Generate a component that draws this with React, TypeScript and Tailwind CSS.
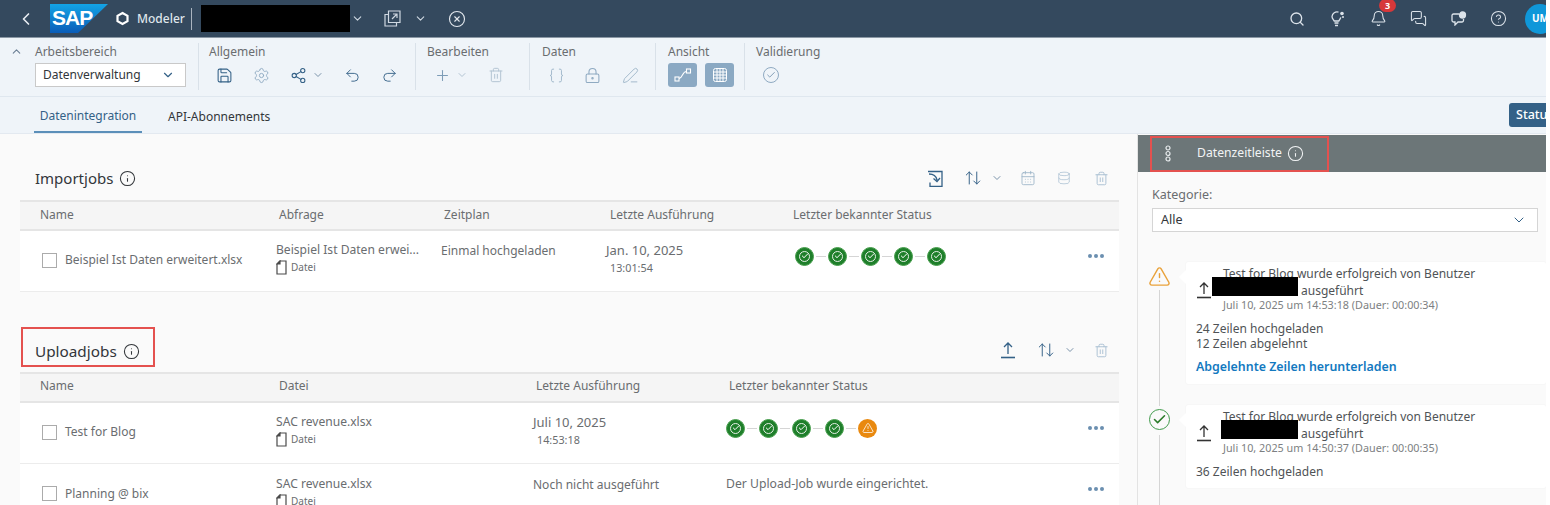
import { ArrowUpDown, Bell, Braces, CalendarDays, Check, ChevronDown, ChevronLeft, ChevronUp, CircleHelp, CircleX, Database, Info, LockKeyhole, MessagesSquare, PenLine, Plus, Redo2, Save, Search, Settings, Share2, Trash2, TriangleAlert, Undo2 } from "lucide-react";

const FileGlyph = () => (
  <svg width="11" height="15" viewBox="0 0 11 15" fill="none" stroke="#4a4a4a" strokeWidth="1.2">
    <path d="M4 1h6v13H1V4z" />
    <path d="M4 1 1 4h3z" fill="#4a4a4a" />
  </svg>
);

const UploadGlyph = ({ color = "#346187", size = 16 }: { color?: string; size?: number }) => (
  <svg width={size} height={size + 2} viewBox="0 0 16 18" fill="none" stroke={color} strokeWidth="1.3">
    <path d="M8 13V2M4 6l4-4 4 4" />
    <path d="M1 16.5h14" strokeWidth="1.6" />
  </svg>
);

const ImportGlyph = () => (
  <svg width="16" height="17" viewBox="0 0 16 17" fill="none" stroke="#346187" strokeWidth="1.3">
    <path d="M1 1.5h14v15H3v-4" />
    <path d="M2 4c3 0 7 1 8 6M6.500 8.500l3.500 3 3-3.500" />
  </svg>
);

const ChainGlyph = ({ color = "#fff" }: { color?: string }) => (
  <svg width="8" height="17" viewBox="0 0 8 17" fill="none" stroke={color} strokeWidth="1.2">
    <circle cx="4" cy="3" r="2" />
    <circle cx="4" cy="8.500" r="2" />
    <circle cx="4" cy="14" r="2" />
  </svg>
);

const ModelerGlyph = () => (
  <svg width="15" height="15" viewBox="0 0 15 15" fill="none" stroke="#fff" strokeWidth="2.200">
    <path d="M7.500 2 12.500 4.800v5.400L7.500 13 2.500 10.200V4.800z" />
  </svg>
);

const PopupGlyph = () => (
  <svg width="17" height="17" viewBox="0 0 17 17" fill="none" stroke="#cfd8e2" strokeWidth="1.2">
    <path d="M4.500 1h11.500v11.500H4.500z" />
    <path d="M4 4.500H1V16h11.500v-3" />
    <path d="M8 9l5-5M9 4h4v4" />
  </svg>
);

const DiagramGlyph = () => (
  <svg width="18" height="14" viewBox="0 0 18 14" fill="none" stroke="#fff" strokeWidth="1.100">
    <rect x="1" y="9" width="4" height="4" />
    <rect x="12.500" y="1" width="4" height="4" />
    <path d="M5 10.500C9 10 8 3.500 12.500 3.500" />
  </svg>
);

const GridGlyph = () => (
  <svg width="16" height="16" viewBox="0 0 16 16" fill="none" stroke="#fff" strokeWidth="1">
    <rect x="1.500" y="1.500" width="13" height="13" rx="2" />
    <path d="M1.500 5h13M1.500 8h13M1.500 11h13M5 1.500v13M8 1.500v13M11 1.500v13" />
  </svg>
);

const ChatCircleGlyph = () => (
  <svg width="16" height="15" viewBox="0 0 16 15" fill="none" stroke="#dce3ea" strokeWidth="1.300">
    <path d="M8 3H2.500A1.500 1.500 0 0 0 1 4.500v5A1.500 1.500 0 0 0 2.500 11H4v3l3-3h4a1.500 1.500 0 0 0 1.500-1.500V8" />
    <circle cx="11.500" cy="4" r="3" fill="#dce3ea" />
  </svg>
);

const BulbGlyph = () => (
  <svg width="17" height="18" viewBox="0 0 17 18" fill="none" stroke="#dce3ea" strokeWidth="1.300">
    <path d="M9.500 2.200A5 5 0 0 0 3 6.500c0 2 1.500 3 2.200 4.500h4.600c.6-1.300 1.700-2.200 2-3.600" />
    <path d="M5.500 13h4M6 15.500h3" strokeWidth="1.600" />
    <circle cx="13" cy="3.500" r="1.800" fill="#dce3ea" stroke="none" />
    <circle cx="14" cy="7" r="1" fill="#dce3ea" stroke="none" />
  </svg>
);

const SapLogo = () => (
  <svg width="58" height="29" viewBox="0 0 58 29" className="shrink-0">
    <defs>
      <linearGradient id="sapFill" x1="0" y1="0" x2="0" y2="1">
        <stop offset="0" stopColor="#13a4e6" />
        <stop offset="1" stopColor="#0a5cb8" />
      </linearGradient>
    </defs>
    <polygon points="0,0 58,0 28,29 0,29" fill="url(#sapFill)" />
    <text x="2" y="21" fill="#fff" fontSize="21" fontWeight="700" fontFamily="'Liberation Sans', sans-serif" letterSpacing="-1">SAP</text>
  </svg>
);

const RedBox = ({ className }: { className: string }) => (
  <div className={`absolute border-2 border-[#e4514f] ${className}`} />
);

const Group = ({ label, children, last = false, className = "" }: { label: string; children: React.ReactNode; last?: boolean; className?: string }) => (
  <div className={`flex h-[47px] flex-col ${last ? "" : "border-r border-[#d9e1e9]"} ${className}`}>
    <span className="text-[12px] leading-[17px] text-[#6a6d70]">{label}</span>
    <div className="mt-[3px] flex h-[24px] items-center">{children}</div>
  </div>
);

const StatusOk = () => (
  <span className="flex h-[19px] w-[19px] items-center justify-center rounded-full border border-[#4aa04f] bg-[#1f7f2b]">
    <span className="flex h-[11px] w-[11px] items-center justify-center rounded-full border border-[#e6efe6]">
      <Check size={8} color="#fff" strokeWidth={3} />
    </span>
  </span>
);

const StatusWarn = () => (
  <span className="flex h-[19px] w-[19px] items-center justify-center rounded-full bg-[#e9890f]">
    <TriangleAlert size={12} color="#fff" strokeWidth={1.5} />
  </span>
);

const StatusTrail = ({ warn = false }: { warn?: boolean }) => (
  <div className="flex items-center">
    {[0, 1, 2, 3].map((i) => (
      <div key={i} className="flex items-center">
        <StatusOk />
        <span className="mx-[2px] h-px w-[10px] bg-[#d5d5d5]" />
      </div>
    ))}
    {warn ? <StatusWarn /> : <StatusOk />}
  </div>
);

const MoreDots = () => (
  <div className="flex gap-[2px]">
    <span className="h-[4px] w-[4px] rounded-full bg-[#6b8fb0]" />
    <span className="h-[4px] w-[4px] rounded-full bg-[#6b8fb0]" />
    <span className="h-[4px] w-[4px] rounded-full bg-[#6b8fb0]" />
  </div>
);

const NameCell = ({ name }: { name: string }) => (
  <div className="flex items-center pb-[2px] pl-[22px]">
    <span className="mr-[8px] h-[15px] w-[15px] border border-[#ababab] bg-white" />
    <span className="text-[12px] text-[#6a6d70]">{name}</span>
  </div>
);

const SourceCell = ({ name }: { name: string }) => (
  <div className="mb-[6px] flex flex-col">
    <span className="text-[12.100px] leading-[17px] text-[#6a6d70]">{name}</span>
    <span className="mt-[2px] flex items-center gap-[4px] text-[10px] leading-[15px] text-[#6a6d70]"><FileGlyph />Datei</span>
  </div>
);

const DateCell = ({ date, time }: { date: string; time: string }) => (
  <div className="mb-[6px] flex flex-col">
    <span className="text-[13px] leading-[17px] text-[#6a6d70]">{date}</span>
    <span className="mt-[2px] pl-[4px] text-[10.800px] leading-[14px] text-[#6a6d70]">{time}</span>
  </div>
);

const Card = ({ barClass, lines, link = false, date }: { barClass: string; lines: string[]; link?: boolean; date: string }) => (
  <div className="relative ml-[48px] w-[360px] rounded-[2px] bg-white pb-[9px] pl-[10px] pt-[3px] text-[#4f5356] shadow-[0_0_2px_rgba(0,0,0,0.06)]">
    <span className="absolute left-[-5px] top-[10px] h-[10px] w-[10px] rotate-45 bg-white" />
    <div className="flex">
      <div className="mt-[16px] w-[27px] shrink-0">
        <UploadGlyph color="#333" />
      </div>
      <div className="relative text-[12px] leading-[17px]">
        <div>Test for Blog wurde erfolgreich von Benutzer</div>
        <div className="pl-[78px]">ausgeführt</div>
        <div className={`absolute top-[12px] h-[19px] bg-black ${barClass}`} />
        <div className="mt-[-1px] text-[10.800px] leading-[14px] text-[#7d7f82]">{date}</div>
      </div>
    </div>
    <div className="mt-[9px] text-[12px] leading-[15px]">
      {lines.map((l) => (
        <div key={l}>{l}</div>
      ))}
    </div>
    {link && <div className="mt-[7px] text-[12.400px] font-semibold leading-[17px] text-[#1379bf]">Abgelehnte Zeilen herunterladen</div>}
  </div>
);

export default function App() {
  return (
    <div className="h-[505px] w-[1550px] overflow-hidden bg-white font-['Noto_Sans',sans-serif]">
      <div className="relative h-[505px] w-[1546px] overflow-hidden">
        {/* Shell */}
        <header className="flex h-[38px] items-center border-b border-[#8b98a5] bg-[#34495e] text-white">
          <ChevronLeft size={20} strokeWidth={2} color="#e8edf2" className="ml-[16px]" />
          <div className="ml-[14px] h-[29px]"><SapLogo /></div>
          <div className="ml-[7px]"><ModelerGlyph /></div>
          <span className="ml-[7px] text-[12px] font-medium text-[#dfe5eb]">Modeler</span>
          <span className="ml-[6px] h-[22px] w-px bg-[#aab4bf]" />
          <span className="ml-[9px] h-[27px] w-[149px] bg-black" />
          <ChevronDown size={13} color="#cfd8e2" className="ml-[1px]" />
          <div className="ml-[20px]"><PopupGlyph /></div>
          <ChevronDown size={13} color="#cfd8e2" className="ml-[13px]" />
          <CircleX size={18} color="#e3e8ee" strokeWidth={1.500} className="ml-[21px]" />
          <div className="ml-auto flex items-center">
            <Search size={16} color="#dce3ea" className="mr-[24px]" />
            <div className="mr-[24px]"><BulbGlyph /></div>
            <div className="relative mr-[23px]">
              <Bell size={17} color="#dce3ea" strokeWidth={1.500} />
              <span className="absolute left-[9px] top-[-11px] flex h-[13px] w-[17px] items-center justify-center rounded-full bg-[#d6383a] text-[9px] font-bold leading-none text-white">3</span>
            </div>
            <MessagesSquare size={17} color="#dce3ea" strokeWidth={1.500} className="mr-[24px]" />
            <div className="mr-[23px]"><ChatCircleGlyph /></div>
            <CircleHelp size={17} color="#dce3ea" strokeWidth={1.500} className="mr-[18px]" />
            <div className="mr-[-9px] flex h-[30px] w-[30px] items-center overflow-hidden rounded-full bg-[#0f97d9] pl-[7px] text-[10px] font-bold text-white">UM</div>
          </div>
        </header>

        {/* Toolbar */}
        <div className="flex h-[59px] items-start border-b border-[#dfe7ef] bg-[#eff4f9] pt-[5px]">
          <ChevronUp size={13} color="#6a7f94" className="ml-[10px] mt-[2px]" />
          <Group label="Arbeitsbereich" className="ml-[12px] w-[164px]">
            <div className="flex h-[24px] w-[151px] items-center justify-between border border-[#c9c9c9] bg-white pl-[7px] pr-[10px] text-[12px] text-[#32363a]">
              Datenverwaltung
              <ChevronDown size={14} color="#346187" />
            </div>
          </Group>
          <Group label="Allgemein" className="ml-[10px] w-[207px]">
            <Save size={17} color="#346187" className="ml-[7px]" strokeWidth={1.500} />
            <Settings size={17} color="#8faac2" className="ml-[20px]" strokeWidth={1.300} />
            <Share2 size={17} color="#346187" className="ml-[20px]" strokeWidth={1.500} />
            <ChevronDown size={12} color="#7a93aa" className="ml-[5px]" />
            <Undo2 size={17} color="#346187" className="ml-[20px]" strokeWidth={1.300} />
            <Redo2 size={17} color="#346187" className="ml-[20px]" strokeWidth={1.300} />
          </Group>
          <Group label="Bearbeiten" className="ml-[11px] w-[103px]">
            <Plus size={17} color="#7d9cb7" className="ml-[7px]" strokeWidth={1.500} />
            <ChevronDown size={12} color="#b3c4d3" className="ml-[5px]" />
            <Trash2 size={16} color="#b3c4d3" className="ml-[20px]" strokeWidth={1.500} />
          </Group>
          <Group label="Daten" className="ml-[12px] w-[114px]">
            <Braces size={17} color="#9db5c9" className="ml-[6px]" strokeWidth={1.300} />
            <LockKeyhole size={17} color="#8faac2" className="ml-[19px]" strokeWidth={1.500} />
            <PenLine size={17} color="#9db5c9" className="ml-[21px]" strokeWidth={1.300} />
          </Group>
          <Group label="Ansicht" className="ml-[12px] w-[77px]">
            <span className="flex h-[24px] w-[29px] items-center justify-center rounded-[3px] bg-[#8ba9c3]"><DiagramGlyph /></span>
            <span className="ml-[8px] flex h-[24px] w-[29px] items-center justify-center rounded-[3px] bg-[#8ba9c3]"><GridGlyph /></span>
          </Group>
          <Group label="Validierung" last className="ml-[11px]">
            <span className="ml-[7px] flex h-[16px] w-[16px] items-center justify-center rounded-full border border-[#8faac2]">
              <Check size={10} color="#6d8eab" strokeWidth={2} />
            </span>
          </Group>
        </div>

        {/* Tabs */}
        <div className="flex h-[37px] items-stretch justify-between border-b border-[#e3e9f0] bg-[#eff4f9]">
          <div className="flex">
            <div className="ml-[34px] flex w-[108px] items-center justify-center border-b-2 border-[#5b8fb9] pt-[4px] text-[12px] text-[#346187]">Datenintegration</div>
            <div className="ml-[26px] flex items-center pt-[4px] text-[12px] text-[#32363a]">API-Abonnements</div>
          </div>
          <div className="mr-[-10px] mt-[6px] flex h-[24px] w-[47px] items-center rounded-[3px] bg-[#346187] pl-[7px] text-[12.500px] font-medium text-white">Status</div>
        </div>

        <div className="flex h-[371px] bg-[#fafafa]">
          {/* Left */}
          <div className="w-[1138px] border-r border-[#e3e3e3] pl-[20px] pr-[18px]">
            <div className="flex h-[66px] items-end justify-between pb-[11px]">
              <div className="flex items-center pl-[15px] text-[15px] leading-[22px] text-[#32363a]">
                Importjobs
                <Info size={17} color="#32363a" strokeWidth={1.500} className="ml-[6px]" />
              </div>
              <div className="flex items-center pb-[2px] pr-[10px]">
                <ImportGlyph />
                <ArrowUpDown size={18} color="#346187" strokeWidth={1.300} className="ml-[21px]" />
                <ChevronDown size={12} color="#7a93aa" className="ml-[9px]" />
                <CalendarDays size={16} color="#9db5c9" strokeWidth={1.300} className="ml-[17px]" />
                <Database size={14} color="#a9bfd2" strokeWidth={1.300} className="ml-[21px]" />
                <Trash2 size={15} color="#a9bfd2" strokeWidth={1.500} className="ml-[23px]" />
              </div>
            </div>
            <div className="grid h-[31px] grid-cols-[239px_165px_166px_183px_1fr] items-center border-y-2 border-[#e5e5e5] bg-[#f5f5f5] pb-[2px] pl-[20px] text-[12px] text-[#6a6d70]">
              <span>Name</span>
              <span>Abfrage</span>
              <span>Zeitplan</span>
              <span>Letzte Ausführung</span>
              <span>Letzter bekannter Status</span>
            </div>
            <div className="grid h-[61px] grid-cols-[256px_165px_165px_189px_1fr] items-center border-b border-[#ececec] bg-white">
              <NameCell name="Beispiel Ist Daten erweitert.xlsx" />
              <SourceCell name="Beispiel Ist Daten erwei..." />
              <span className="mt-[-20px] text-[12px] text-[#6a6d70]">Einmal hochgeladen</span>
              <DateCell date="Jan. 10, 2025" time="13:01:54" />
              <div className="flex items-center justify-between pb-[10px] pr-[15px]">
                <StatusTrail />
                <MoreDots />
              </div>
            </div>

            <div className="flex h-[80px] items-end justify-between pb-[10px]">
              <div className="flex items-center pl-[15px] text-[15.300px] leading-[22px] text-[#32363a]">
                Uploadjobs
                <Info size={17} color="#32363a" strokeWidth={1.500} className="ml-[6px]" />
              </div>
              <div className="flex items-center pb-[3px] pr-[10px]">
                <UploadGlyph />
                <ArrowUpDown size={18} color="#346187" strokeWidth={1.300} className="ml-[21px]" />
                <ChevronDown size={12} color="#7a93aa" className="ml-[9px]" />
                <Trash2 size={15} color="#a9bfd2" strokeWidth={1.500} className="ml-[18px]" />
              </div>
            </div>
            <div className="grid h-[31px] grid-cols-[239px_257px_193px_1fr] items-center border-y-2 border-[#e5e5e5] bg-[#f5f5f5] pb-[4px] pl-[20px] text-[12px] text-[#6a6d70]">
              <span>Name</span>
              <span>Datei</span>
              <span>Letzte Ausführung</span>
              <span>Letzter bekannter Status</span>
            </div>
            <div className="grid h-[61px] grid-cols-[256px_257px_193px_1fr] items-center border-b border-[#ececec] bg-white">
              <NameCell name="Test for Blog" />
              <SourceCell name="SAC revenue.xlsx" />
              <DateCell date="Juli 10, 2025" time="14:53:18" />
              <div className="flex items-center justify-between pb-[10px] pr-[15px]">
                <StatusTrail warn />
                <MoreDots />
              </div>
            </div>
            <div className="grid h-[61px] grid-cols-[256px_257px_193px_1fr] items-center bg-white">
              <NameCell name="Planning @ bix" />
              <SourceCell name="SAC revenue.xlsx" />
              <span className="mt-[-20px] text-[12px] text-[#6a6d70]">Noch nicht ausgeführt</span>
              <div className="flex items-center justify-between pb-[10px] pr-[15px]">
                <span className="mt-[-10px] text-[12.200px] text-[#6a6d70]">Der Upload-Job wurde eingerichtet.</span>
                <MoreDots />
              </div>
            </div>
          </div>

          {/* Right */}
          <aside className="relative flex-1 overflow-hidden">
            <div className="mt-[1px] flex h-[37px] items-center bg-[#6c7678] text-[12.200px] text-[#f2f4f5]">
              <div className="ml-[26px]"><ChainGlyph color="#e8ecee" /></div>
              <span className="ml-[25px]">Datenzeitleiste</span>
              <Info size={17} color="#f2f4f5" strokeWidth={1.500} className="ml-[5px]" />
            </div>
            <div className="px-[14px] pt-[14px]">
              <div className="text-[12.500px] leading-[17px] text-[#6a6d70]">Kategorie:</div>
              <div className="mt-[5px] flex h-[24px] w-[386px] items-center justify-between border border-[#d5d5d5] bg-white pl-[8px] pr-[10px] text-[12.500px] text-[#32363a]">
                Alle
                <ChevronDown size={16} color="#346187" strokeWidth={1.500} />
              </div>
            </div>
            <div className="mt-[30px] flex flex-col gap-[21px]">
              <div className="relative">
                <div className="absolute left-[21px] top-[28px] h-[116px] w-px bg-[#d5d5d5]" />
                <TriangleAlert size={23} color="#e9a23b" strokeWidth={1.500} className="absolute left-[10px] top-[3px]" />
                <Card barClass="left-[-11px] w-[86px]" date="Juli 10, 2025 um 14:53:18 (Dauer: 00:00:34)" lines={["24 Zeilen hochgeladen", "12 Zeilen abgelehnt"]} link />
              </div>
              <div className="relative">
                <div className="absolute left-[21px] top-[30px] h-[100px] w-px bg-[#d5d5d5]" />
                <span className="absolute left-[11px] top-[4px] flex h-[21px] w-[21px] items-center justify-center rounded-full border border-[#3f9a4a]">
                  <Check size={15} color="#2b7c2b" strokeWidth={2.500} />
                </span>
                <Card barClass="left-[-2px] w-[77px]" date="Juli 10, 2025 um 14:50:37 (Dauer: 00:00:35)" lines={["36 Zeilen hochgeladen"]} />
              </div>
            </div>
          </aside>
        </div>

        {/* Annotations from the original screenshot */}
        <RedBox className="left-[21px] top-[327px] h-[40px] w-[134px]" />
        <RedBox className="left-[1150px] top-[136px] h-[36px] w-[179px]" />
      </div>
    </div>
  );
}
